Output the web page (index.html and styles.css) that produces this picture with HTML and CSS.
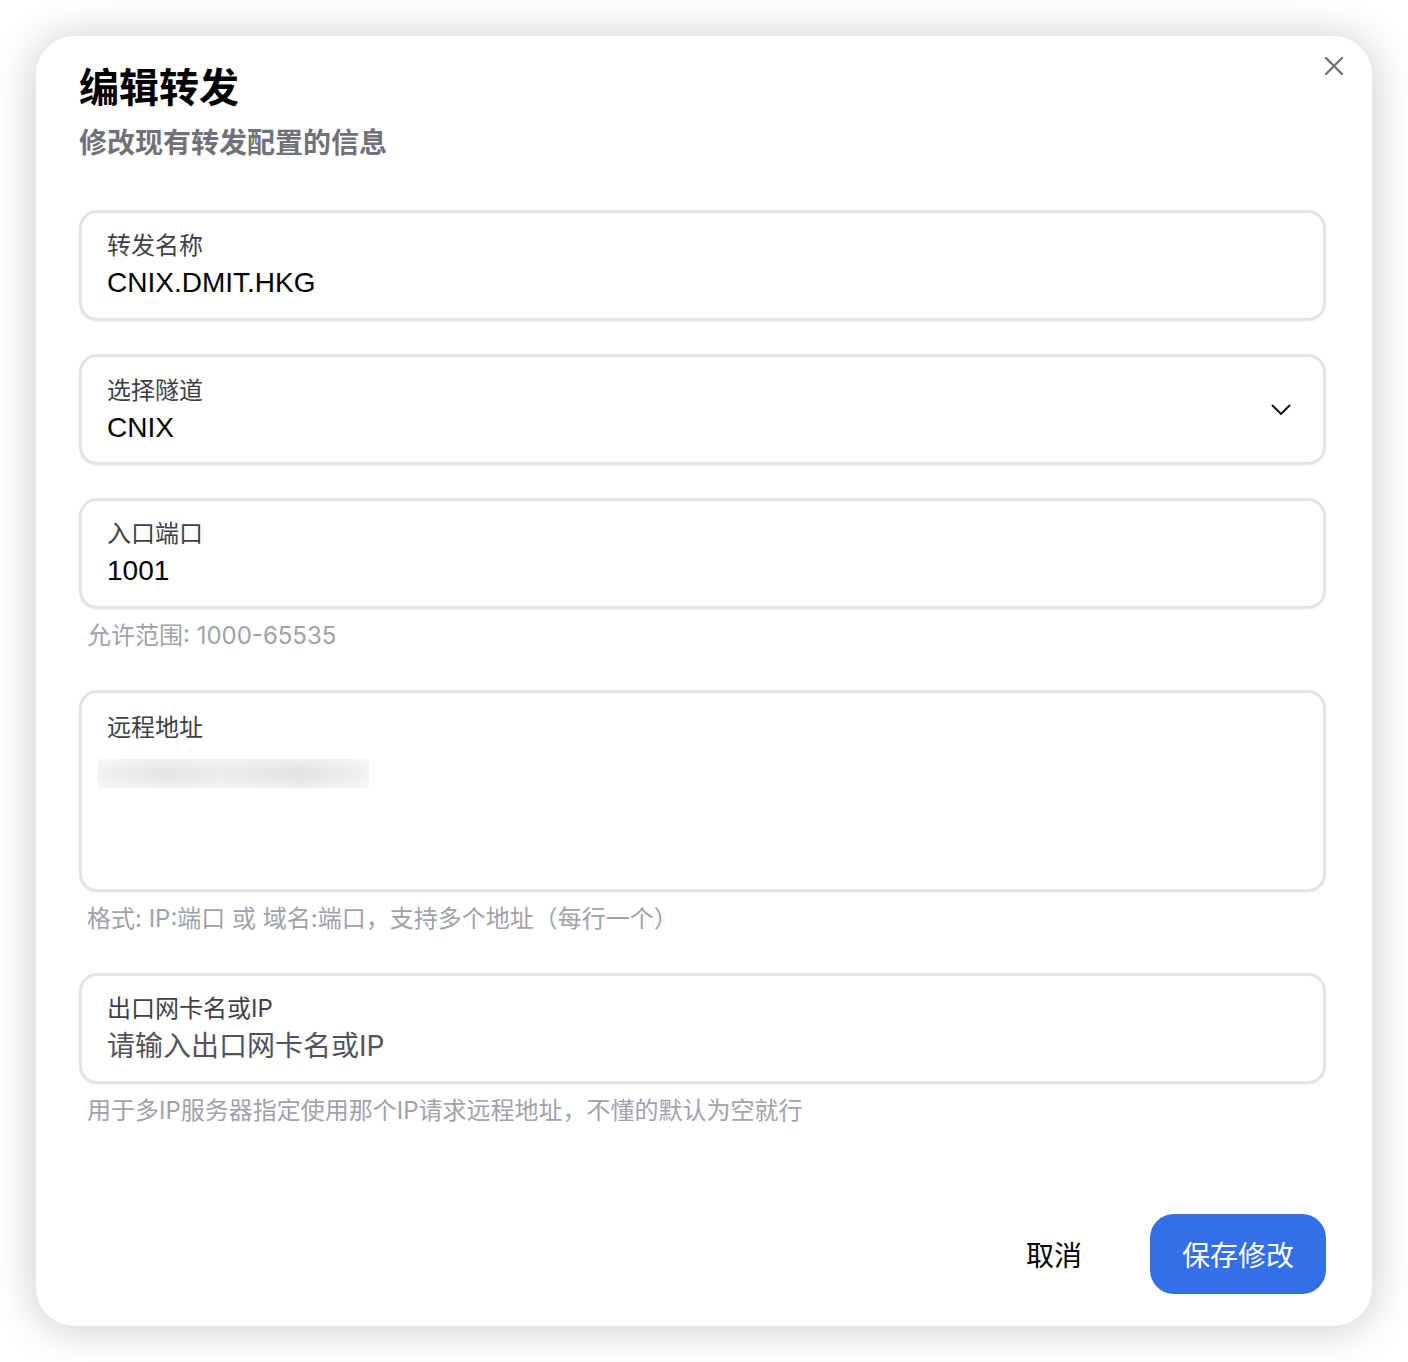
FILE: index.html
```html
<!DOCTYPE html>
<html lang="zh-CN">
<head>
<meta charset="utf-8">
<title>编辑转发</title>
<link rel="stylesheet" href="styles.css">
</head>
<body>
<div class="dialog">
  <button class="close" type="button" aria-label="关闭">
    <svg width="20" height="20" viewBox="0 0 20 20"><path d="M2 2 L18 18 M18 2 L2 18" fill="none" stroke="currentColor" stroke-width="2.4" stroke-linecap="round"/></svg>
  </button>
  <header class="head">
    <h1 class="title">编辑转发</h1>
    <p class="subtitle">修改现有转发配置的信息</p>
  </header>
  <div class="form">
    <div class="field">
      <div class="box">
        <div class="label">转发名称</div>
        <div class="value">CNIX.DMIT.HKG</div>
      </div>
    </div>
    <div class="field">
      <div class="box select">
        <div class="box-main">
          <div class="label">选择隧道</div>
          <div class="value">CNIX</div>
        </div>
        <svg class="chev" width="20" height="12" viewBox="0 0 20 12"><path d="M1.5 1.5 L10 10 L18.5 1.5" fill="none" stroke="#111" stroke-width="2" stroke-linecap="round" stroke-linejoin="round"/></svg>
      </div>
    </div>
    <div class="field">
      <div class="box">
        <div class="label">入口端口</div>
        <div class="value">1001</div>
      </div>
      <div class="help">允许范围: 1000-65535</div>
    </div>
    <div class="field">
      <div class="box area">
        <div class="label">远程地址</div>
        <div class="redact"></div>
      </div>
      <div class="help">格式: IP:端口 或 域名:端口，支持多个地址（每行一个）</div>
    </div>
    <div class="field">
      <div class="box">
        <div class="label">出口网卡名或IP</div>
        <div class="value placeholder">请输入出口网卡名或IP</div>
      </div>
      <div class="help">用于多IP服务器指定使用那个IP请求远程地址，不懂的默认为空就行</div>
    </div>
  </div>
  <footer class="foot">
    <button class="btn btn-light" type="button">取消</button>
    <button class="btn btn-primary" type="button">保存修改</button>
  </footer>
</div>
</body>
</html>
```
FILE: styles.css
```css
* { box-sizing: border-box; }
html, body { margin: 0; padding: 0; background: #ffffff; }
body {
  padding: 36px;
  font-family: Inter, "Noto Sans CJK SC", sans-serif;
  color: #11181c;
}
.dialog {
  position: relative;
  width: 1336px;
  height: 1290px;
  background: #fff;
  border-radius: 38px;
  box-shadow: 0 2px 44px rgba(0, 0, 0, 0.22);
  display: flex;
  flex-direction: column;
  padding: 25px 46px 32px 43px;
}
.close {
  position: absolute;
  top: 20px;
  right: 28px;
  width: 20px;
  height: 20px;
  padding: 0;
  border: 0;
  background: none;
  color: #71717a;
  display: flex;
}
.head { display: flex; flex-direction: column; }
.title {
  margin: 0;
  font-size: 40px;
  line-height: 48px;
  font-weight: 700;
  color: #000;
  font-family: "Noto Sans CJK SC", sans-serif;
}
.subtitle {
  margin: 14px 0 0;
  font-size: 28px;
  line-height: 36px;
  font-weight: 600;
  color: #71717a;
  font-family: "Noto Sans CJK SC", sans-serif;
}
.form {
  margin-top: 51px;
  display: flex;
  flex-direction: column;
  gap: 33px;
}
.field { display: flex; flex-direction: column; }
.box {
  height: 111px;
  border: 3px solid #e4e4e7;
  border-radius: 18px;
  padding: 18px 25px 0;
  display: flex;
  flex-direction: column;
  box-shadow: 0 1px 2px rgba(0,0,0,0.05);
}
.box.select {
  flex-direction: row;
  align-items: center;
  padding-top: 1px;
  padding-right: 32px;
}
.box-main { flex: 1; display: flex; flex-direction: column; }
.box.area { height: 202px; padding-top: 20px; }
.label {
  font-size: 24px;
  line-height: 30px;
  color: #3f3f46;
  font-family: Inter, "Noto Sans CJK SC", sans-serif;
}
.value {
  margin-top: 5px;
  font-size: 28px;
  line-height: 34px;
  color: #000;
  font-family: "Liberation Sans", "Noto Sans CJK SC", sans-serif;
}
.value.placeholder { color: #52525b; font-family: Inter, "Noto Sans CJK SC", sans-serif; }
.chev { flex: none; margin-top: -1px; }
.redact {
  margin: 16px 0 0 -9px;
  width: 271px;
  height: 29px;
  background:
    linear-gradient(to bottom, rgba(255,255,255,0.45), rgba(255,255,255,0) 40%, rgba(255,255,255,0) 60%, rgba(255,255,255,0.45)),
    linear-gradient(to right, #f1f1f1, #e5e5e5 25%, #ececec 45%, #e3e3e3 75%, #eeeeee 95%, #f3f3f3);
}
.help {
  margin: 12px 0 6px 8px;
  font-size: 24px;
  line-height: 30px;
  color: #a1a1aa;
}
.foot {
  margin-top: auto;
  display: flex;
  justify-content: flex-end;
  gap: 8px;
}
.btn {
  width: 176px;
  height: 80px;
  border: 0;
  border-radius: 24px;
  font-size: 28px;
  font-family: "Noto Sans CJK SC", sans-serif;
  padding: 0;
}
.btn-light { background: transparent; color: #000; }
.btn-primary { background: #3370e6; color: #fff; }
```
